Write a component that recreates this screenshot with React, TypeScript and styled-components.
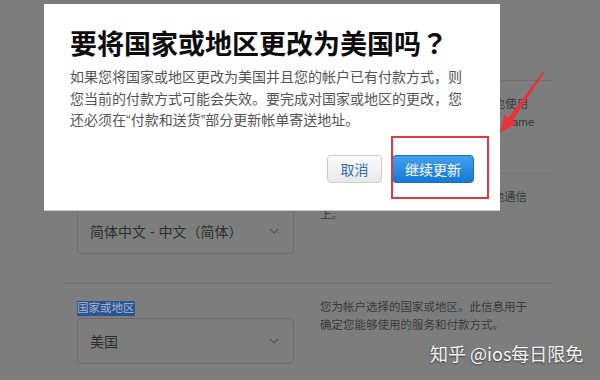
import React from "react";
import styled, { createGlobalStyle } from "styled-components";

const Global = createGlobalStyle`
  html, body { margin: 0; padding: 0; }
  body {
    width: 600px;
    height: 380px;
    overflow: hidden;
    background: #7d7d7d;
    font-family: "Liberation Sans", "Noto Sans CJK SC", sans-serif;
  }
`;

const Page = styled.div`
  position: relative;
  width: 600px;
  height: 380px;
  overflow: hidden;
  background: #7d7d7d;
`;

const Sections = styled.div`
  width: 488px;
  margin-left: 64px;
  padding-top: 80px;
`;

const Section = styled.section<{ $bottom: number; $height?: number }>`
  box-sizing: border-box;
  display: grid;
  grid-template-columns: 217px 219px;
  column-gap: 26px;
  align-items: start;
  padding: 17px 13px ${(p) => p.$bottom}px;
  border-top: 1px solid #717171;
  ${(p) => (p.$height ? `height: ${p.$height}px; overflow: hidden;` : "")}
`;

const LeftCol = styled.div`
  display: flex;
  flex-direction: column;
  gap: 2px;
`;

const Label = styled.div`
  font-size: 11.5px;
  line-height: 15px;
  height: 15px;
  color: #3a3a3a;
`;

const Highlight = styled.span`
  display: inline-block;
  background: #2b5592;
  color: #a9b5c8;
  line-height: 15px;
`;

const Select = styled.div`
  box-sizing: border-box;
  height: 46px;
  border: 1px solid #6b6b6b;
  border-radius: 4px;
  display: flex;
  align-items: center;
  justify-content: space-between;
  padding: 0 14px 0 12px;
  font-family: "Liberation Sans", "Noto Sans CJK SC", sans-serif;
  font-size: 14px;
  color: #2e2e2e;
`;

const Desc = styled.div`
  margin-top: -2px;
  font-size: 11.5px;
  line-height: 17.5px;
  color: #3a3a3a;
  white-space: nowrap;
`;

const Chevron = () => (
  <svg width="10" height="6" viewBox="0 0 10 6">
    <path d="M1 1 L5 5 L9 1" fill="none" stroke="#555" strokeWidth="1.1" />
  </svg>
);

const Dialog = styled.div`
  position: absolute;
  left: 44px;
  top: 4px;
  width: 456px;
  height: 207px;
  box-sizing: border-box;
  padding: 22px 26px 27px;
  background: #ffffff;
  border-bottom: 1px solid #c9c9c9;
  display: flex;
  flex-direction: column;
`;

const Title = styled.h1`
  margin: 0;
  font-family: "Noto Sans CJK SC", sans-serif;
  font-size: 27px;
  line-height: 34px;
  font-weight: 700;
  color: #0d0d0d;
  white-space: nowrap;
`;

const Punct = styled.span`
  font-family: "Noto Sans CJK TC", "Noto Sans CJK SC", sans-serif;
`;

const Body = styled.p`
  margin: 7px 0 0;
  font-family: "Liberation Sans", "Noto Sans CJK SC", sans-serif;
  font-size: 14px;
  line-height: 21.5px;
  color: #555;
`;

const Buttons = styled.div`
  margin-top: auto;
  display: flex;
  justify-content: flex-end;
  gap: 10px;
`;

const Button = styled.button<{ $primary?: boolean }>`
  box-sizing: border-box;
  height: 28px;
  padding: 0 12px;
  min-width: ${(p) => (p.$primary ? "81px" : "55px")};
  border-radius: 4px;
  font-family: "Noto Sans CJK SC", sans-serif;
  font-size: 14px;
  line-height: 26px;
  cursor: pointer;
  border: 1px solid ${(p) => (p.$primary ? "#1a6fc4" : "#cfcfcf")};
  color: ${(p) => (p.$primary ? "#ffffff" : "#2f6db5")};
  background: ${(p) =>
    p.$primary
      ? "linear-gradient(#42a1ec, #1479d6)"
      : "linear-gradient(#fbfbfb, #e9e9e9)"};
`;

const RedBox = styled.div`
  position: absolute;
  left: 391px;
  top: 136px;
  width: 98px;
  height: 63px;
  box-sizing: border-box;
  border: 2px solid #e0393e;
`;

const Arrow = styled.svg`
  position: absolute;
  left: 490px;
  top: 60px;
`;

const Watermark = styled.div`
  position: absolute;
  left: 430px;
  top: 340px;
  font-family: "Noto Sans CJK SC", sans-serif;
  font-size: 18px;
  line-height: 26px;
  color: #f4f4f4;
  white-space: nowrap;
  text-shadow: 0 1px 2px rgba(0, 0, 0, 0.55);
`;

export default function App() {
  return (
    <Page>
      <Global />
      <Sections>
        <Section $bottom={29} $height={93}>
          <LeftCol />
          <Desc>
            此电子邮件地址是您的 Apple ID，也使用
            <br />
            可用于 iTunes Store、App Store 和 Game
          </Desc>
        </Section>
        <Section $bottom={29}>
          <LeftCol>
            <Label />
            <Select>
              <span>简体中文 - 中文（简体）</span>
              <Chevron />
            </Select>
          </LeftCol>
          <Desc>
            您的首选语言将用于电子邮件和其他通信
            <br />
            上。
          </Desc>
        </Section>
        <Section $bottom={29}>
          <LeftCol>
            <Label>
              <Highlight>国家或地区</Highlight>
            </Label>
            <Select>
              <span>美国</span>
              <Chevron />
            </Select>
          </LeftCol>
          <Desc>
            您为帐户选择的国家或地区。此信息用于
            <br />
            确定您能够使用的服务和付款方式。
          </Desc>
        </Section>
      </Sections>

      <Dialog>
        <Title>
          要将国家或地区更改为美国吗<Punct>？</Punct>
        </Title>
        <Body>
          如果您将国家或地区更改为美国并且您的帐户已有付款方式，则您当前的付款方式可能会失效。要完成对国家或地区的更改，您还必须在“付款和送货”部分更新帐单寄送地址。
        </Body>
        <Buttons>
          <Button>取消</Button>
          <Button $primary>继续更新</Button>
        </Buttons>
      </Dialog>

      <RedBox />
      <Arrow width="60" height="80" viewBox="0 0 60 80">
        <polygon
          points="53.5,11.5 52.3,12.6 18.5,57.5 14.5,54.5 10,73 26.5,63.5 22.5,60.5 54.5,12.5"
          fill="#e8333b"
        />
      </Arrow>

      <Watermark>知乎 @ios每日限免</Watermark>
    </Page>
  );
}
